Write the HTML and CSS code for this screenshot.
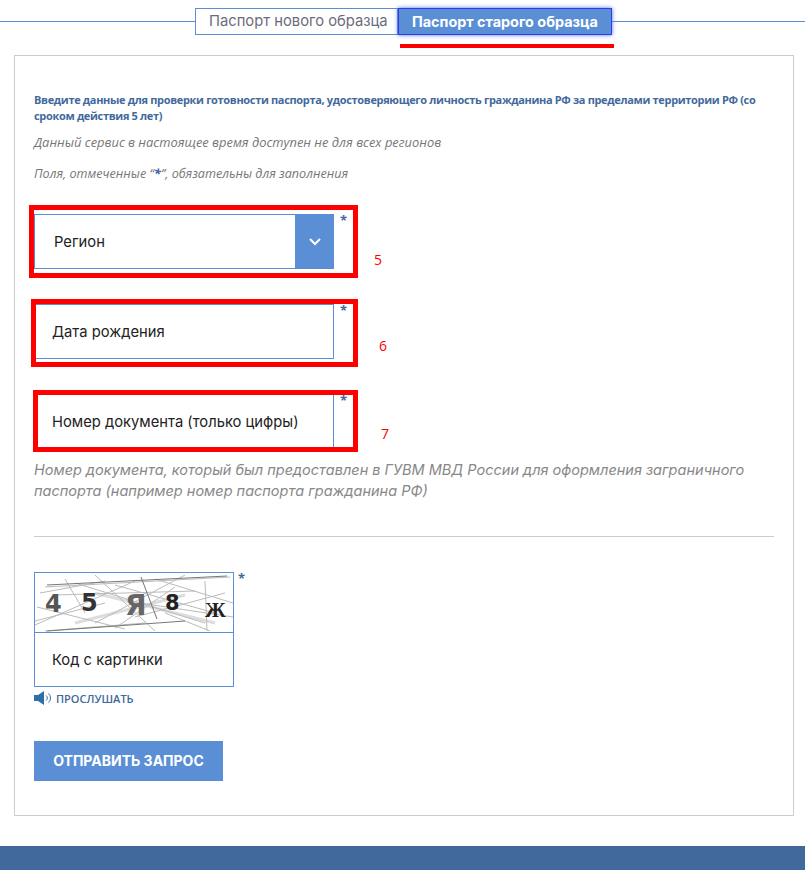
FILE: index.html
```html
<!doctype html>
<html lang="ru">
<head>
    <meta charset="UTF-8" />
    <meta name="viewport" content="width=device-width, initial-scale=1.0" />
    <link rel="stylesheet" href="styles.css">
</head>
<body>
    <div class="page">
        <div class="tabs">
            <a href="#" class="tab">Паспорт нового образца</a>
            <a href="#" class="tab tab-active">Паспорт старого образца</a>
        </div>

        <div class="panel">
            <p class="intro">Введите данные для проверки готовности паспорта, удостоверяющего личность гражданина РФ за пределами территории РФ (со сроком действия 5 лет)</p>
            <p class="note">Данный сервис в настоящее время доступен не для всех регионов</p>
            <p class="note note-last">Поля, отмеченные “<span class="note-star">*</span>”, обязательны для заполнения</p>

            <div class="field-row">
                <div class="field field-select">
                    <span class="field-text field-text-region">Регион</span>
                    <span class="select-btn">
                        <svg width="14" height="9" viewBox="0 0 14 9"><path d="M2 2l5 5 5-5" fill="none" stroke="#fff" stroke-width="2"/></svg>
                    </span>
                </div>
                <span class="req">*</span>
            </div>
            <div class="field-row">
                <div class="field"><span class="field-text">Дата рождения</span></div>
                <span class="req">*</span>
            </div>
            <div class="field-row">
                <div class="field"><span class="field-text">Номер документа (только цифры)</span></div>
                <span class="req">*</span>
            </div>
            <p class="hint">Номер документа, который был предоставлен в ГУВМ МВД России для оформления заграничного паспорта (например номер паспорта гражданина РФ)</p>

            <hr class="divider">

            <div class="field-row">
                <div class="captcha">
                    <svg class="captcha-img" width="198" height="59" viewBox="0 0 198 59">
                        <g fill="none" stroke="#ddd" stroke-width="3">
                            <path d="M60 20L180 50M40 50L150 22"/>
                        </g>
                        <g fill="none" stroke="#bbb" stroke-width="1">
                            <path d="M10 14L195 4M0 52L100 8M40 10L170 50M60 2L120 58M2 34L90 56M120 6L198 30"/>
                            <path d="M150 2L60 50M20 22L160 18M100 44L190 20M0 48L70 30M130 40L175 58M170 8L172 58"/>
                            <path d="M30 6L50 40M80 12L180 40M10 58L110 50M140 14L80 55M5 20L70 8M105 30L198 44"/>
                        </g>
                        <g fill="none" stroke="#777" stroke-width="1">
                            <path d="M12 12L192 3M106 4L122 46M12 58L150 48"/>
                        </g>
                        <text x="10" y="39" class="cap cap-1">4</text>
                        <text x="46" y="38" class="cap cap-2">5</text>
                        <text x="90" y="42" class="cap cap-3">Я</text>
                        <text x="130" y="37" class="cap cap-4">8</text>
                        <text x="170" y="44" class="cap cap-5">Ж</text>
                    </svg>
                    <div class="captcha-input"><span class="field-text">Код с картинки</span></div>
                </div>
                <span class="req req-captcha">*</span>
            </div>
            <a href="#" class="listen">
                <svg width="20" height="14" viewBox="0 0 20 14">
                    <path d="M0 4h4l6-4v14l-6-4H0z" fill="#2f6fa8"/>
                    <path d="M12 4.5a3 3 0 0 1 0 5M14.5 2.5a6 6 0 0 1 0 9" fill="none" stroke="#2f6fa8" stroke-width="1"/>
                </svg>
                ПРОСЛУШАТЬ
            </a>
            <a href="#" class="submit-btn">ОТПРАВИТЬ ЗАПРОС</a>
        </div>

        <div class="footer"></div>

        <!-- red marks drawn over the screenshot -->
        <div class="mark mark-tab"></div>
        <div class="mark mark-5"></div>
        <div class="mark mark-6"></div>
        <div class="mark mark-7"></div>
        <span class="mark-num num-5">5</span>
        <span class="mark-num num-6">6</span>
        <span class="mark-num num-7">7</span>
    </div>
</body>
</html>
```

FILE: styles.css
```css
body {
    font-family: "Open Sans", sans-serif;
    margin: 0;
    padding: 0;
    background: #fff;
}

.page {
    position: relative;
    height: 870px;
    overflow: hidden;
}

.tabs {
    display: flex;
    padding: 8px 0 0 195px;
    height: 55px;
    box-sizing: border-box;
    background: linear-gradient(#5a8fd6, #5a8fd6) 0 21px / 100% 1px no-repeat;
}

.tab {
    height: 27px;
    line-height: 25px;
    box-sizing: border-box;
    border: 1px solid #5a8fd6;
    background: #fff;
    color: #6b6b7b;
    font-family: "Inter", sans-serif;
    font-size: 14.75px;
    text-decoration: none;
    padding: 0 9px 0 13px;
    width: 203px;
    white-space: nowrap;
}

.tab-active {
    width: 214px;
    padding: 0 0 0 13px;
    background: #5a8fd6;
    color: #fff;
    font-weight: 700;
    font-size: 14.4px;
    border: 1px solid #2a3fe8;
    box-shadow: 0 0 4px #5566ee;
}

.panel {
    margin: 0 11px 0 14px;
    height: 761px;
    box-sizing: border-box;
    border: 1px solid #ccc;
    padding: 36px 19px 0;
}

.intro {
    margin: 0 0 10px;
    font-size: 11px;
    line-height: 16px;
    font-weight: 700;
    letter-spacing: -0.33px;
    color: #41699c;
}

.note {
    margin: 0 0 14px;
    font-size: 12.9px;
    line-height: 17px;
    font-style: italic;
    color: #777;
}

.note-last {
    margin-bottom: 32px;
    font-size: 12.6px;
}

.note-star {
    color: #41699c;
    font-size: 13px;
    font-weight: 700;
    line-height: 13px;
}

.field-row {
    display: flex;
    margin-bottom: 35px;
}

.field {
    width: 300px;
    height: 55px;
    box-sizing: border-box;
    border: 1px solid #5a8fd6;
    display: flex;
    align-items: center;
    justify-content: space-between;
}

.field-text {
    font-family: "Inter", sans-serif;
    font-size: 14.75px;
    color: #222;
    padding-left: 17px;
    white-space: nowrap;
}

.field-text-region {
    padding-left: 19px;
}

.select-btn {
    width: 39px;
    height: 55px;
    margin-right: -1px;
    background: #5a8fd6;
    display: flex;
    align-items: center;
    justify-content: center;
}

.req {
    color: #41699c;
    font-size: 13px;
    font-weight: 700;
    line-height: 13px;
    margin-left: 6px;
}

.hint {
    margin: -25px 0 0;
    font-family: "Inter", sans-serif;
    font-size: 14.5px;
    line-height: 21px;
    font-style: italic;
    color: #888;
}

.divider {
    border: 0;
    border-top: 1px solid #ccc;
    margin: 35px 0;
}

.captcha {
    width: 200px;
    height: 115px;
    box-sizing: border-box;
    border: 1px solid #5a8fd6;
}

.captcha-img {
    display: block;
    height: 59px;
    border-bottom: 1px solid #5a8fd6;
}

.cap {
    font-family: "DejaVu Sans", sans-serif;
    font-weight: 700;
}

.cap-1 { font-size: 24px; fill: #555; }
.cap-2 { font-size: 24px; fill: #333; }
.cap-3 { font-size: 28px; fill: #666; }
.cap-4 { font-size: 21px; fill: #222; }
.cap-5 { font-size: 21px; fill: #222; font-family: "Liberation Serif", serif; }

.captcha-input {
    height: 54px;
    display: flex;
    align-items: center;
}

.req-captcha {
    margin-left: 4px;
}

.listen {
    display: flex;
    align-items: center;
    gap: 2px;
    margin-top: -31px;
    height: 14px;
    font-size: 11px;
    font-weight: 600;
    color: #41699c;
    text-decoration: none;
}

.submit-btn {
    display: block;
    width: 189px;
    height: 40px;
    line-height: 40px;
    margin-top: 36px;
    background: #5a8fd6;
    color: #fff;
    font-family: "Inter", sans-serif;
    font-size: 14px;
    font-weight: 700;
    text-align: center;
    text-decoration: none;
}

.footer {
    margin-top: 30px;
    height: 24px;
    background: #41699c;
}

.mark {
    position: absolute;
    box-sizing: border-box;
    border: 5px solid #f00;
}

.mark-tab {
    left: 400px;
    top: 44px;
    width: 214px;
    height: 4px;
    border: 0;
    background: #f00;
}

.mark-5 {
    left: 29px;
    top: 205px;
    width: 329px;
    height: 73px;
}

.mark-6 {
    left: 31px;
    top: 299px;
    width: 327px;
    height: 68px;
}

.mark-7 {
    left: 33px;
    top: 390px;
    width: 325px;
    height: 62px;
}

.mark-num {
    position: absolute;
    color: #f00;
    font-size: 14px;
    line-height: 18px;
}

.num-5 { left: 374px; top: 251px; }
.num-6 { left: 379px; top: 337px; }
.num-7 { left: 381px; top: 425px; }
```
